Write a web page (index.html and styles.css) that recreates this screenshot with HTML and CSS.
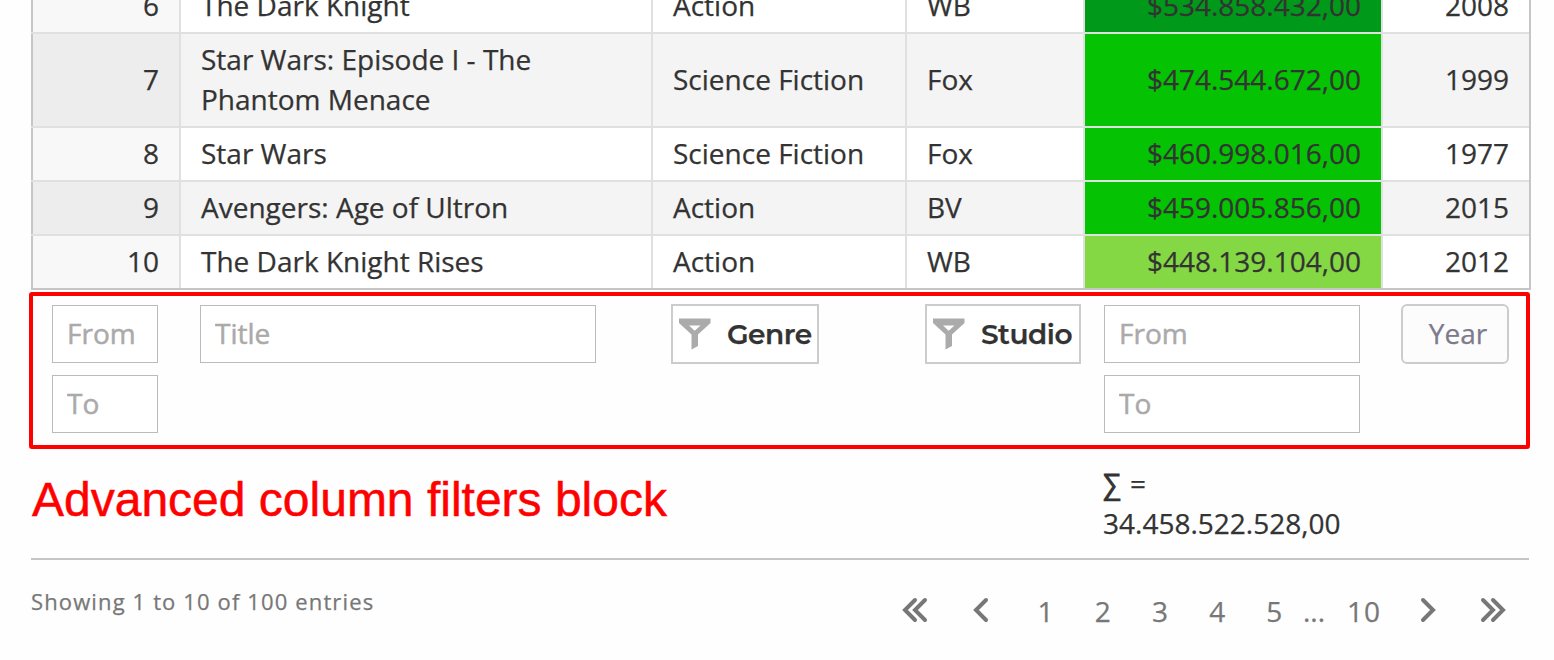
FILE: index.html
```html
<!DOCTYPE html>
<html lang="en">
<head>
<meta charset="utf-8">
<title>Movies</title>
<link rel="stylesheet" href="styles.css">
</head>
<body>
<main class="page">
  <div class="table">
    <div class="row"><div class="num rank">6</div><div>The Dark Knight</div><div>Action</div><div>WB</div><div class="num dark">$534.858.432,00</div><div class="num">2008</div></div>
    <div class="row odd tall"><div class="num rank">7</div><div>Star Wars: Episode I - The Phantom Menace</div><div>Science Fiction</div><div>Fox</div><div class="num mid">$474.544.672,00</div><div class="num">1999</div></div>
    <div class="row"><div class="num rank">8</div><div>Star Wars</div><div>Science Fiction</div><div>Fox</div><div class="num mid">$460.998.016,00</div><div class="num">1977</div></div>
    <div class="row odd"><div class="num rank">9</div><div>Avengers: Age of Ultron</div><div>Action</div><div>BV</div><div class="num mid">$459.005.856,00</div><div class="num">2015</div></div>
    <div class="row last"><div class="num rank">10</div><div>The Dark Knight Rises</div><div>Action</div><div>WB</div><div class="num light">$448.139.104,00</div><div class="num">2012</div></div>
  </div>

  <section class="filters">
    <div class="cell"><input class="field small" placeholder="From"><input class="field small" placeholder="To"></div>
    <div class="cell"><input class="field title" placeholder="Title"></div>
    <div class="cell"><button class="pick genre"><svg class="funnel" viewBox="0 0 32 32"><path fill="#ababab" fill-rule="evenodd" d="M0 0.5H31.5V5L19 16.5V28L12.5 31.5V16.5L0 5ZM10 7.5H21.5L15.7 12.7Z"/></svg><span class="pick-text">Genre</span></button></div>
    <div class="cell"><button class="pick studio"><svg class="funnel" viewBox="0 0 32 32"><path fill="#ababab" fill-rule="evenodd" d="M0 0.5H31.5V5L19 16.5V28L12.5 31.5V16.5L0 5ZM10 7.5H21.5L15.7 12.7Z"/></svg><span class="pick-text">Studio</span></button></div>
    <div class="cell"><input class="field wide" placeholder="From"><input class="field wide" placeholder="To"></div>
    <div class="cell"><button class="year">Year</button></div>
  </section>

  <section class="summary">
    <h1 class="caption">Advanced column filters block</h1>
    <div class="sum"><span class="sigma">∑</span> =<br>34.458.522.528,00</div>
  </section>

  <footer class="footer">
    <div class="info">Showing 1 to 10 of 100 entries</div>
    <nav class="pager">
      <a class="arrow first"><svg width="26" height="26" viewBox="0 0 26 26"><path d="M13 3L3 13L13 23M23 3L13 13L23 23"/></svg></a>
      <a class="arrow prev"><svg width="16" height="26" viewBox="0 0 16 26"><path d="M13 3L3 13L13 23"/></svg></a>
      <a class="p">1</a><a class="p">2</a><a class="p">3</a><a class="p">4</a><a class="p">5</a><span class="dots">...</span><a class="p ten">10</a>
      <a class="arrow next"><svg width="16" height="26" viewBox="0 0 16 26"><path d="M3 3L13 13L3 23"/></svg></a>
      <a class="arrow end"><svg width="26" height="26" viewBox="0 0 26 26"><path d="M3 3L13 13L3 23M13 3L23 13L13 23"/></svg></a>
    </nav>
  </footer>
</main>
</body>
</html>
```
FILE: styles.css
```css
* { box-sizing: border-box; }
html, body { margin: 0; }
body {
  height: 660px;
  overflow: hidden;
  background: #fefefe;
  color: #333;
  font: 28px/40px "Open Sans", "Noto Sans", sans-serif;
  -webkit-text-stroke: 0.25px;
}
.page { display: flow-root; width: 1554px; height: 660px; overflow: hidden; }

.table { width: 1500px; margin: -22px 0 0 31px; border-right: 2px solid #c6c6c6; }
.row {
  display: grid;
  grid-template-columns: 148px 472px 254px 178px 298px 148px;
  height: 54px;
  border-top: 2px solid #e0e0e0;
  background: #fff;
}
.row.tall { height: 94px; }
.row.last { height: 56px; border-bottom: 2px solid #c6c6c6; }
.row > div { display: flex; align-items: center; padding: 0 20px 2px; border-left: 2px solid #e0e0e0; }
.row > .num { justify-content: flex-end; }
.row > .rank { border-left-color: #c6c6c6; background: #f8f8f8; }
.row.odd { background: #f4f4f4; }
.row.odd > .rank { background: #ededed; }
.row > .dark { background: #00991a; }
.row > .mid { background: #05c203; }
.row > .light { background: #83d843; }

.filters {
  display: grid;
  grid-template-columns: 148px 472px 254px 178px 298px 143px;
  width: 1501px;
  height: 157px;
  margin: 2px 0 0 29px;
  border: 4px solid #f00;
  border-radius: 3px;
}
.cell { display: flex; flex-direction: column; align-items: flex-start; gap: 12px; padding: 8px 0 0 18px; }
.field {
  height: 58px;
  margin: 1px 0 -1px 1px;
  padding: 0 14px 2px;
  border: 1px solid #bbb;
  border-radius: 0;
  background: #fff;
  font: inherit;
}
.field::placeholder { color: #aaa; opacity: 1; -webkit-text-stroke: 0.5px; }
.small { width: 106px; }
.title { width: 396px; }
.wide { width: 256px; }
.pick {
  display: flex;
  align-items: center;
  height: 60px;
  padding: 0 0 0 6px;
  border: 2px solid #ccc;
  background: #fff;
  color: #333;
}
.genre { width: 148px; }
.studio { width: 156px; }
.funnel { width: 32px; height: 32px; margin-right: 16px; flex: none; }
.pick-text { font: 600 28px/40px "Montserrat", Lato, sans-serif; letter-spacing: -0.5px; white-space: nowrap; }
.year {
  width: 108px;
  height: 60px;
  padding: 0 0 2px 6px;
  border: 2px solid #ccc;
  border-radius: 6px;
  background: #fcfcfc;
  color: #7c7a8c;
  font: inherit;
}

.summary {
  display: flex;
  justify-content: space-between;
  width: 1498px;
  height: 111px;
  margin-left: 31px;
  border-bottom: 2px solid #c6c6c6;
}
.caption {
  margin: 21px 0 0 1px;
  color: #f00;
  font: 48px/60px "Liberation Sans", Arial, sans-serif;
  -webkit-text-stroke: 0.5px;
}
.sum { width: 426px; padding-top: 14px; }
.sigma { margin-right: 2px; -webkit-text-stroke: 0.8px; }

.footer { display: flex; justify-content: space-between; width: 1498px; margin-left: 31px; color: #777; }
.info { padding-top: 21px; font-size: 22px; letter-spacing: 1.13px; }
.pager { display: flex; height: 40px; margin: 31px 23px 0 0; }
.pager a { flex: none; }
.arrow svg { display: block; margin-top: 6px; fill: none; stroke: #777; stroke-width: 4; stroke-linecap: round; }
.prev { margin-left: 45px; }
.p { width: 57.2px; text-align: center; }
.prev + .p { margin-left: 28px; }
.dots { margin-left: 0; }
.ten { width: 36px; margin-left: 21px; letter-spacing: 1px; }
.next { margin-left: 38px; }
.end { margin-left: 44px; }
```
